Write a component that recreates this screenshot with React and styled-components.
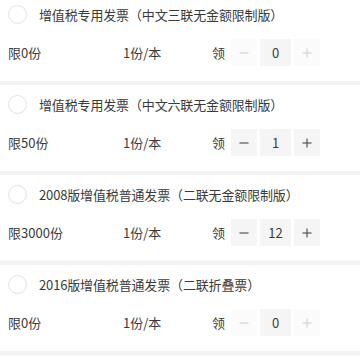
import React, { useState } from 'react';
import styled, { createGlobalStyle } from 'styled-components';

const Global = createGlobalStyle`
  html, body { margin: 0; padding: 0; background: #ffffff; }
  body { font-family: "Noto Sans CJK SC", "Noto Sans", sans-serif; color: #3a3a3a; overflow: hidden; }
  * { box-sizing: border-box; }
`;

const invoices = [
  { name: '增值税专用发票（中文三联无金额限制版）', limit: 0, count: 0 },
  { name: '增值税专用发票（中文六联无金额限制版）', limit: 50, count: 1 },
  { name: '2008版增值税普通发票（二联无金额限制版）', limit: 3000, count: 12 },
  { name: '2016版增值税普通发票（二联折叠票）', limit: 0, count: 0 },
];

const List = styled.div`
  margin-top: -5px;
  display: flex;
  flex-direction: column;
`;

const Card = styled.div`
  height: 90px;
  padding: 10px 0 0 8px;
  border-bottom: 4px solid #f2f2f2;
  display: flex;
  flex-direction: column;
  gap: 16px;
`;

const TitleRow = styled.div`
  display: flex;
  align-items: center;
  height: 18px;
  gap: 12px;
`;

const Radio = styled.span`
  width: 19px;
  height: 19px;
  border-radius: 50%;
  border: 1px solid #e3e3e3;
  flex-shrink: 0;
`;

const Title = styled.span`
  font-size: 13px;
  color: #3a3a3a;
  white-space: nowrap;
  letter-spacing: -0.15px;
`;

const InfoRow = styled.div`
  display: flex;
  align-items: center;
  height: 27px;
  font-size: 13px;
  color: #3a3a3a;
`;

const Cell = styled.span`
  width: ${p => p.w}px;
  flex-shrink: 0;
  white-space: nowrap;
`;

const Stepper = styled.div`
  display: flex;
  gap: 3px;
  margin-left: 6px;
`;

const StepBtn = styled.button`
  width: 26px;
  height: 27px;
  border: none;
  padding: 0;
  background: ${p => (p.disabled ? '#fbfbfb' : '#f5f5f5')};
  color: ${p => (p.disabled ? '#d4d4d4' : '#555')};
  display: flex;
  align-items: center;
  justify-content: center;
`;

const Value = styled.div`
  width: 31px;
  height: 27px;
  background: #f5f5f5;
  display: flex;
  align-items: center;
  justify-content: center;
  font-size: 13px;
  color: #3a3a3a;
`;

const Sign = ({ plus }) => (
  <svg width="10" height="10" viewBox="0 0 10 10">
    <line x1="0.5" y1="5" x2="9.5" y2="5" stroke="currentColor" strokeWidth="1.2" />
    {plus && <line x1="5" y1="0.5" x2="5" y2="9.5" stroke="currentColor" strokeWidth="1.2" />}
  </svg>
);

const InvoiceCard = ({ item }) => {
  const [count, setCount] = useState(item.count);
  const off = item.limit === 0;
  return (
    <Card>
      <TitleRow>
        <Radio />
        <Title>{item.name}</Title>
      </TitleRow>
      <InfoRow>
        <Cell w={115}>限{item.limit}份</Cell>
        <Cell w={89}>1份/本</Cell>
        <Cell w={13}>领</Cell>
        <Stepper>
          <StepBtn disabled={off} onClick={() => setCount(Math.max(0, count - 1))}>
            <Sign />
          </StepBtn>
          <Value>{count}</Value>
          <StepBtn disabled={off} onClick={() => setCount(Math.min(item.limit, count + 1))}>
            <Sign plus />
          </StepBtn>
        </Stepper>
      </InfoRow>
    </Card>
  );
};

export default function App() {
  return (
    <>
      <Global />
      <List>
        {invoices.map((it, i) => (
          <InvoiceCard key={i} item={it} />
        ))}
      </List>
    </>
  );
}
